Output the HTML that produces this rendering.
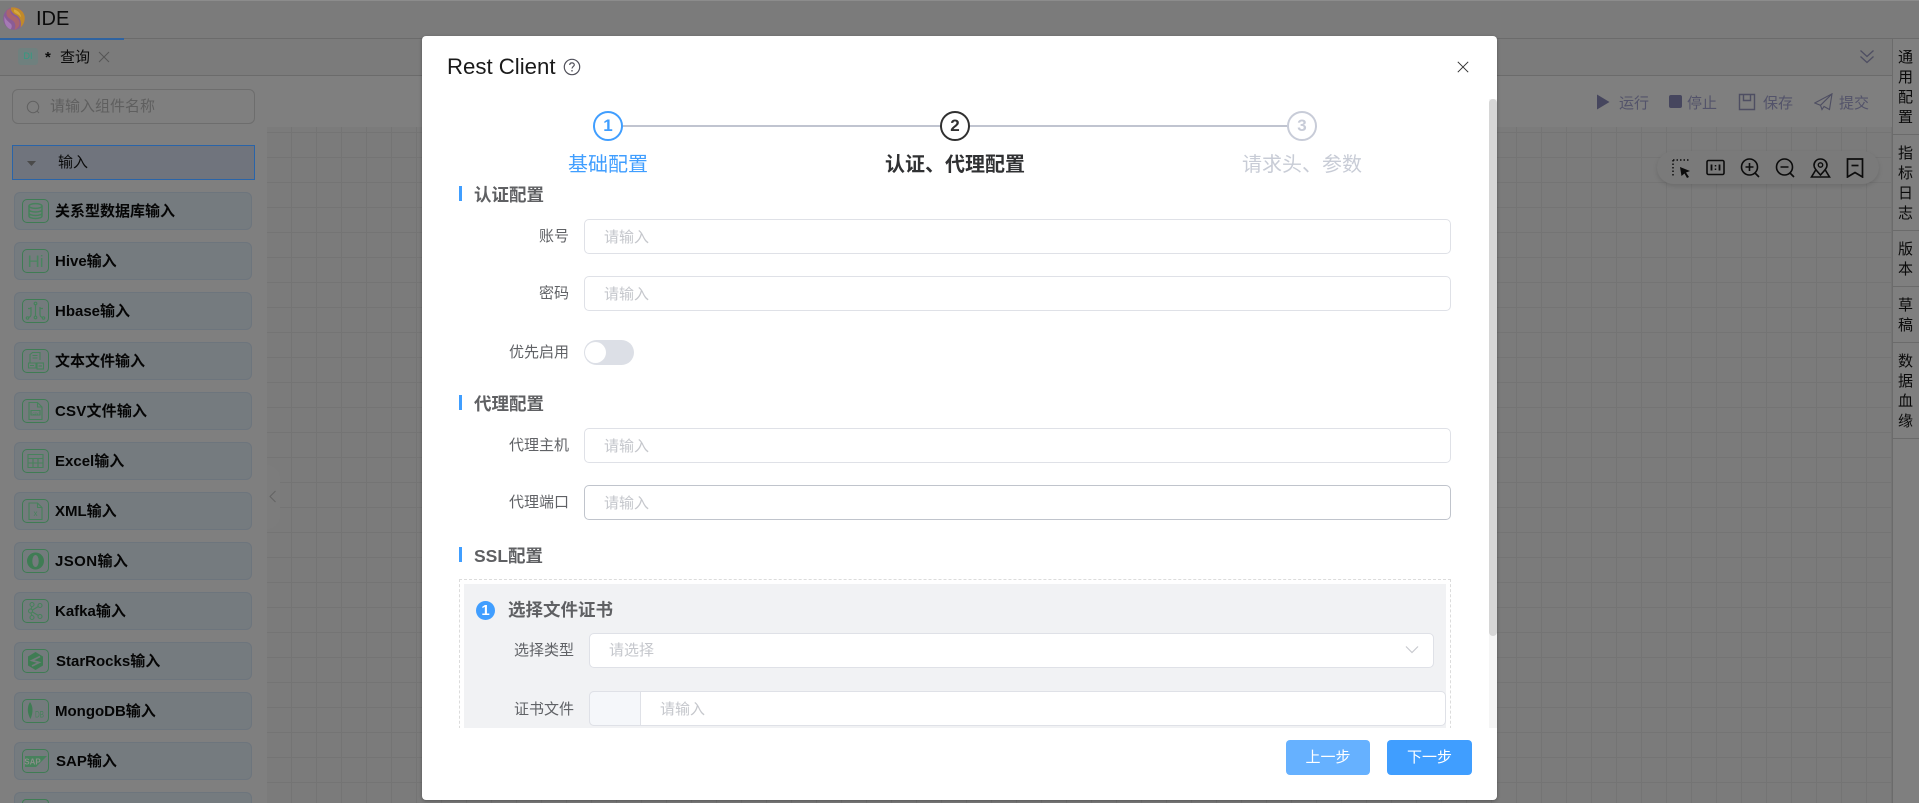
<!DOCTYPE html>
<html lang="zh">
<head>
<meta charset="utf-8">
<title>IDE</title>
<style>
html,body{margin:0;padding:0;width:1919px;height:803px;overflow:hidden;background:#7f7f7f}
body{position:relative;font-family:"Liberation Sans","Noto Sans CJK SC",sans-serif;color:#000}
div,span,svg{position:absolute;box-sizing:border-box}
.t{white-space:nowrap}
.line{background:#6b6b6b}
.item{left:14px;width:238px;height:38px;background:#757b7f;border:1px solid #6d757d;border-radius:6px}
.ib{left:22px;width:27px;height:24px;border:1px solid #3f7c54;border-radius:5px;background:#747b7d}
.it{left:55px;margin-top:1px;font-size:15px;font-weight:bold;line-height:20px;color:#050505;white-space:nowrap}
.tb{margin-top:1px;font-size:15px;line-height:20px;color:#53536a;white-space:nowrap}
.side{left:1897px;margin-top:1px;width:17px;font-size:15px;line-height:20px;text-align:center;color:#0a0a0a}
.hr{left:1892px;width:27px;height:1px;background:#6b6b6b}
.lb{margin-top:1px;font-size:15px;line-height:20px;color:#606266;text-align:right;white-space:nowrap}
.inp{background:#fff;border:1px solid #dfe1e7;border-radius:5px;height:35px}
.ph{margin-top:1px;font-size:15px;line-height:20px;color:#c5c7cc;white-space:nowrap}
.bar{left:459px;width:3px;height:15px;background:#409eff}
.sec{left:474px;font-size:17.5px;line-height:22px;font-weight:bold;color:#5f6063;white-space:nowrap}
.circ{width:30px;height:30px;top:111px;border-radius:50%;border:2px solid;background:#fff;font-size:17px;font-weight:bold;line-height:26px;text-align:center}
.stp{top:153px;font-size:20px;line-height:24px;white-space:nowrap}
.btn{top:740px;height:35px;border-radius:4px;color:#fff;font-size:15px;line-height:36px;text-align:center}
</style>
</head>
<body>

<!-- header -->
<div style="left:0;top:0;width:1919px;height:38px;background:#7b7b7b"></div>
<div style="left:0;top:0;width:1919px;height:1px;background:#8c8c8c"></div>
<svg style="left:3px;top:7px" width="22" height="23" viewBox="0 0 22 23">
<ellipse cx="11" cy="11.5" rx="10.8" ry="11.3" fill="#8a5c96"/>
<path d="M8 .6C14 -.5 20 3 21.600 9C22.300 13 21 17.500 17.500 20.500C18.800 15 17 10 13 8C10 6.500 7.500 4 8 .6Z" fill="#c08a2a"/>
<path d="M4 3.500C2.500 7 4 10.500 8 12.500C12 14.500 13.500 18 11.500 22.800C15.500 21.500 17.500 17.500 16 13.500C14.500 9.500 8.500 9 7.500 5C7.200 3.800 7.500 2.500 8.500 1.200C6.800 1.500 5.200 2.300 4 3.500Z" fill="#a9646e"/>
<path d="M11 2.500C14.500 3 17.500 6 18.300 10.500C16.500 8 14 7 12 5.800C10.800 5 10.500 3.800 11 2.500Z" fill="#d8a83c"/>
<path d="M1.500 9C2.500 13 6 15 8 17C9.300 18.800 8.800 21 7.500 22.300C3.500 20.800 .6 16 1.500 9Z" fill="#a57ab4"/>
</svg>
<div class="t" style="left:36px;top:7px;font-size:20px;line-height:24px;color:#0a0a0a">IDE</div>
<div class="line" style="left:0;top:38px;width:1892px;height:1px"></div>

<!-- tab row -->
<div style="left:0;top:39px;width:1892px;height:36px;background:#7b7b7b"></div>
<div style="left:0;top:38px;width:124px;height:2px;background:#2f63a0"></div>
<div style="left:18px;top:48px;width:20px;height:17px;border-radius:3px;background:#6f807e;color:#2f9c80;font-size:9px;line-height:17px;text-align:center">DI</div>
<div class="t" style="left:45px;top:48px;font-size:15px;line-height:20px;font-weight:bold;color:#0a0a0a">*</div>
<div class="t" style="left:60px;top:48px;font-size:15px;line-height:20px;color:#0a0a0a">查询</div>
<svg style="left:98px;top:51px" width="12" height="12" viewBox="0 0 12 12"><path d="M1 1L11 11M11 1L1 11" stroke="#555" stroke-width="1" fill="none"/></svg>
<div class="line" style="left:0;top:75px;width:1892px;height:1px"></div>
<svg style="left:1859px;top:49px" width="16" height="16" viewBox="0 0 16 16"><path d="M1.500 1.500L8 7.500L14.500 1.500M1.500 7.500L8 13.500L14.500 7.500" stroke="#4e4e62" stroke-width="1.300" fill="none"/></svg>

<!-- main backgrounds -->
<div style="left:0;top:76px;width:1892px;height:727px;background:#7f7f7f"></div>
<div style="left:267px;top:127px;width:1625px;height:676px;background-color:#7b7b7b;background-image:linear-gradient(#747474 1px,transparent 1px),linear-gradient(90deg,#747474 1px,transparent 1px);background-size:25px 25px;background-position:24px 5px"></div>
<div style="left:267px;top:465px;width:13px;height:64px;background:#7c7c7c;border-radius:0 14px 14px 0"></div>
<svg style="left:269px;top:490px" width="8" height="13" viewBox="0 0 8 13"><path d="M6.500 1L1 6.500L6.500 12" stroke="#636363" fill="none"/></svg>

<!-- search -->
<div style="left:12px;top:89px;width:243px;height:35px;border:1px solid #6d6d6d;border-radius:6px"></div>
<svg style="left:26px;top:100px" width="15" height="15" viewBox="0 0 15 15"><circle cx="7" cy="7" r="5.700" stroke="#616161" fill="none"/><path d="M11 11L13 13" stroke="#616161"/></svg>
<div class="t" style="left:50px;top:97px;font-size:15px;line-height:20px;color:#5f5f5f">请输入组件名称</div>

<!-- category -->
<div style="left:12px;top:145px;width:243px;height:35px;background:#70747d;border:1px solid #2a64a8"></div>
<svg style="left:27px;top:161px" width="9" height="5" viewBox="0 0 9 5"><path d="M0 0H9L4.500 5Z" fill="#4a4a4a"/></svg>
<div class="t" style="left:58px;top:153px;font-size:15px;line-height:20px;color:#0a0a0a">输入</div>

<!-- items -->
<div class="item" style="top:192px"></div><div class="ib" style="top:199px"></div>
<svg style="left:22px;top:199px" width="27" height="24" viewBox="0 0 27 24"><g fill="none" stroke="#47825c" stroke-width="1.500"><ellipse cx="13.500" cy="7" rx="6.500" ry="2.400"/><path d="M7 7V17C7 18.600 10 19.500 13.500 19.500S20 18.600 20 17V7M7 10.500C7 12 10 13 13.500 13S20 12 20 10.500M7 14C7 15.500 10 16.500 13.500 16.500S20 15.500 20 14"/></g></svg>
<div class="it" style="top:201px">关系型数据库输入</div>

<div class="item" style="top:242px"></div><div class="ib" style="top:249px"></div>
<div class="t" style="left:22px;top:249px;width:27px;text-align:center;font-size:17px;line-height:25px;color:#4a8560">Hi</div>
<div class="it" style="top:251px">Hive输入</div>

<div class="item" style="top:292px"></div><div class="ib" style="top:299px"></div>
<svg style="left:22px;top:299px" width="27" height="24" viewBox="0 0 27 24"><g fill="none" stroke="#47825c" stroke-width="1.200"><path d="M13.500 5V17M9 8V15C9 17.500 8 18 6.500 18.500M18 8V15C18 17.500 19 18 20.500 18.500"/><path d="M6 9.500H9M18 9.500H21"/><circle cx="13.500" cy="4.500" r="1.300"/><circle cx="13.500" cy="18.500" r="1.300"/><circle cx="5.500" cy="19" r="1.200"/><circle cx="21.500" cy="19" r="1.200"/></g></svg>
<div class="it" style="top:301px">Hbase输入</div>

<div class="item" style="top:342px"></div><div class="ib" style="top:349px"></div>
<svg style="left:22px;top:349px" width="27" height="24" viewBox="0 0 27 24"><g fill="none" stroke="#47825c" stroke-width="1.100"><path d="M8 14V5.500L10.500 3.500H18V11M6.500 14H14V19H6.500Z"/><path d="M10.500 6.500H15.500M10.500 9H15.500M8 16.500H12"/><rect x="15" y="14" width="6.500" height="6"/><path d="M16.500 17H20"/></g></svg>
<div class="it" style="top:351px">文本文件输入</div>

<div class="item" style="top:392px"></div><div class="ib" style="top:399px"></div>
<svg style="left:22px;top:399px" width="27" height="24" viewBox="0 0 27 24"><path d="M7 3.500H15.500L20 8V20.500H7Z M15.500 3.500V8H20 M9 11.500H18V16H9Z" fill="none" stroke="#47825c" stroke-width="1.100"/><text x="13.500" y="15.300" font-size="4" text-anchor="middle" fill="#47825c" font-family="Liberation Sans">csv</text></svg>
<div class="it" style="top:401px;letter-spacing:.2px">CSV文件输入</div>

<div class="item" style="top:442px"></div><div class="ib" style="top:449px"></div>
<svg style="left:22px;top:449px" width="27" height="24" viewBox="0 0 27 24"><path d="M6 5.500H21V18.500H6ZM6 9.500H21M6 14H21M11 9.500V18.500M16 9.500V18.500" fill="none" stroke="#47825c" stroke-width="1.100"/></svg>
<div class="it" style="top:451px">Excel输入</div>

<div class="item" style="top:492px"></div><div class="ib" style="top:499px"></div>
<svg style="left:22px;top:499px" width="27" height="24" viewBox="0 0 27 24"><path d="M7 4H15.500L20 8.500V20.500H7Z M15.500 4V8.500H20" fill="none" stroke="#47825c" stroke-width="1.100"/><text x="13.500" y="17" font-size="8" text-anchor="middle" fill="#47825c" font-family="Liberation Sans">x</text></svg>
<div class="it" style="top:501px">XML输入</div>

<div class="item" style="top:542px"></div><div class="ib" style="top:549px"></div>
<svg style="left:22px;top:549px" width="27" height="24" viewBox="0 0 27 24"><circle cx="13.500" cy="12" r="8.500" fill="#3f7c54"/><ellipse cx="13.500" cy="12" rx="3.200" ry="6" fill="#747b7d"/></svg>
<div class="it" style="top:551px;letter-spacing:.4px">JSON输入</div>

<div class="item" style="top:592px"></div><div class="ib" style="top:599px"></div>
<svg style="left:22px;top:599px" width="27" height="24" viewBox="0 0 27 24"><g fill="none" stroke="#47825c" stroke-width="1.100"><circle cx="10" cy="5.500" r="2"/><circle cx="8.500" cy="12" r="2"/><circle cx="10" cy="18.500" r="2"/><circle cx="18" cy="6.500" r="2"/><circle cx="18" cy="17.500" r="2"/><path d="M10 7.500L9 10M10 16.500L9 14M10.500 11L16.300 7.500M10.500 13L16.300 16.500"/></g></svg>
<div class="it" style="top:601px">Kafka输入</div>

<div class="item" style="top:642px"></div><div class="ib" style="top:649px"></div>
<svg style="left:22px;top:649px" width="27" height="24" viewBox="0 0 27 24"><path d="M13.500 3L21 7.500V16.500L13.500 21L6 16.500V7.500Z" fill="#3f7c54"/><path d="M18 7.500L10 11.500L17 13.500L10 17" fill="none" stroke="#747b7d" stroke-width="1.800"/></svg>
<div class="it" style="top:651px;left:56px">StarRocks输入</div>

<div class="item" style="top:692px"></div><div class="ib" style="top:699px"></div>
<svg style="left:22px;top:699px" width="27" height="24" viewBox="0 0 27 24"><path d="M8 3C11 7 11.500 13 8.500 20C5 14 5 8 8 3Z" fill="#3f7c54"/><text x="17.500" y="18.500" font-size="9" text-anchor="middle" fill="#47825c" font-family="Liberation Sans" textLength="9" lengthAdjust="spacingAndGlyphs">DB</text></svg>
<div class="it" style="top:701px">MongoDB输入</div>

<div class="item" style="top:742px"></div><div class="ib" style="top:749px"></div>
<svg style="left:22px;top:749px" width="27" height="24" viewBox="0 0 27 24"><path d="M3 7H25L14 18H3Z" fill="#47825c"/><text x="10.500" y="15.500" font-size="8" font-weight="bold" text-anchor="middle" fill="#8a8f8a" font-family="Liberation Sans">SAP</text></svg>
<div class="it" style="top:751px;left:56px">SAP输入</div>

<div class="item" style="top:792px;height:11px;border-bottom:0;border-radius:6px 6px 0 0"></div>
<div class="ib" style="top:799px;height:4px;border-bottom:0;border-radius:5px 5px 0 0"></div>

<!-- toolbar -->
<svg style="left:1596px;top:94px" width="14" height="16" viewBox="0 0 14 16"><path d="M1 .5L13.500 8L1 15.500Z" fill="#46465e"/></svg>
<div class="tb" style="left:1619px;top:93px">运行</div>
<div style="left:1669px;top:95px;width:13px;height:13px;border-radius:2px;background:#46465e"></div>
<div class="tb" style="left:1687px;top:93px">停止</div>
<svg style="left:1738px;top:93px" width="18" height="18" viewBox="0 0 18 18"><path d="M1.500 1.500H16.500V16.500H1.500ZM5.500 1.500V7.500H12.500V1.500" fill="none" stroke="#4e4e62" stroke-width="1.400"/></svg>
<div class="tb" style="left:1763px;top:93px">保存</div>
<svg style="left:1814px;top:93px" width="19" height="18" viewBox="0 0 19 18"><path d="M18 .8L.8 10L6.500 12.300L18 .8L15.500 16.500L10 13.500L8 16.500L6.500 12.300" fill="none" stroke="#4e4e62" stroke-width="1.100"/></svg>
<div class="tb" style="left:1839px;top:93px">提交</div>

<!-- float toolbar -->
<div style="left:1657px;top:151px;width:222px;height:33px;border-radius:17px;background:#7a7a7a;box-shadow:0 2px 5px rgba(0,0,0,.12)"></div>
<svg style="left:1671px;top:158px" width="20" height="20" viewBox="0 0 20 20"><path d="M2 2H18M2 2V19" fill="none" stroke="#0c0c0c" stroke-width="1.500" stroke-dasharray="1.500 2"/><path d="M9 9L19 13L15 14.500L18 19L16 20L13.500 15.500L10.500 18Z" fill="#0c0c0c"/></svg>
<svg style="left:1706px;top:158px" width="19" height="19" viewBox="0 0 19 19"><rect x="1" y="2.500" width="17" height="14" rx="1.500" fill="none" stroke="#0c0c0c" stroke-width="1.600"/><path d="M5.500 6.500V12.500M13.500 6.500V12.500" stroke="#0c0c0c" stroke-width="1.800"/><path d="M9.500 7V8.500M9.500 10.500V12" stroke="#0c0c0c" stroke-width="1.500"/></svg>
<svg style="left:1740px;top:158px" width="20" height="20" viewBox="0 0 20 20"><circle cx="9.500" cy="9" r="8" fill="none" stroke="#0c0c0c" stroke-width="1.600"/><path d="M15 15L19 19M5.500 9H13.500M9.500 5V13" stroke="#0c0c0c" stroke-width="1.600" fill="none"/></svg>
<svg style="left:1775px;top:158px" width="20" height="20" viewBox="0 0 20 20"><circle cx="9.500" cy="9" r="8" fill="none" stroke="#0c0c0c" stroke-width="1.600"/><path d="M15 15L19 19M5.500 9H13.500" stroke="#0c0c0c" stroke-width="1.600" fill="none"/></svg>
<svg style="left:1810px;top:158px" width="21" height="20" viewBox="0 0 21 20"><path d="M10.500 1C6.500 1 4 4 4 7.200C4 10 6.500 12.500 10.500 17C14.500 12.500 17 10 17 7.200C17 4 14.500 1 10.500 1Z" fill="none" stroke="#0c0c0c" stroke-width="1.600"/><circle cx="10.500" cy="7" r="2.200" fill="none" stroke="#0c0c0c" stroke-width="1.400"/><path d="M6 11.500L1.500 19H19.500L15 11.500" fill="none" stroke="#0c0c0c" stroke-width="1.600"/></svg>
<svg style="left:1846px;top:158px" width="18" height="20" viewBox="0 0 18 20"><path d="M1.500 1H16.500V19L9 14.500L1.500 19Z" fill="none" stroke="#0c0c0c" stroke-width="1.700"/><path d="M5.500 7.500H12.500" stroke="#0c0c0c" stroke-width="1.700"/></svg>

<!-- right sidebar -->
<div style="left:1892px;top:38px;width:1px;height:765px;background:#6b6b6b"></div>
<div class="line" style="left:1892px;top:38px;width:27px;height:1px"></div>
<div class="side" style="top:47px">通<br>用<br>配<br>置</div>
<div class="hr" style="top:134px"></div>
<div class="side" style="top:143px">指<br>标<br>日<br>志</div>
<div class="hr" style="top:230px"></div>
<div class="side" style="top:239px">版<br>本</div>
<div class="hr" style="top:286px"></div>
<div class="side" style="top:295px">草<br>稿</div>
<div class="hr" style="top:342px"></div>
<div class="side" style="top:351px">数<br>据<br>血<br>缘</div>
<div class="hr" style="top:438px"></div>

<!-- modal -->
<div style="left:422px;top:36px;width:1075px;height:764px;background:#fff;border-radius:4px;box-shadow:0 1px 3px rgba(0,0,0,.3)"></div>
<div class="t" style="left:447px;top:53px;font-size:22.2px;line-height:28px;color:#1a1a1a">Rest Client</div>
<svg style="left:563px;top:58px" width="18" height="18" viewBox="0 0 18 18"><circle cx="9" cy="9" r="7.700" fill="none" stroke="#50505a" stroke-width="1.200"/><path d="M6.700 7C6.800 5.600 7.800 4.900 9 4.900C10.300 4.900 11.300 5.700 11.300 6.900C11.300 8.400 9 8.500 9 10.500" fill="none" stroke="#50505a" stroke-width="1.200"/><circle cx="9" cy="12.800" r=".8" fill="#50505a"/></svg>
<svg style="left:1457px;top:61px" width="12" height="12" viewBox="0 0 12 12"><path d="M.8 .8L11.200 11.200M11.200 .8L.8 11.200" stroke="#333" stroke-width="1" fill="none"/></svg>

<!-- scrollbar -->
<div style="left:1489px;top:99px;width:8px;height:629px;background:#f5f5f5"></div>
<div style="left:1489px;top:99px;width:8px;height:537px;background:#d6d6d6;border-radius:4px"></div>

<!-- steps -->
<div style="left:623px;top:125px;width:664px;height:2px;background:#c0c4d0"></div>
<div class="circ" style="left:593px;border-color:#409eff;color:#409eff">1</div>
<div class="circ" style="left:940px;border-color:#303030;color:#303030">2</div>
<div class="circ" style="left:1287px;border-color:#c8ccd8;color:#c8ccd8">3</div>
<div class="stp" style="left:568px;color:#409eff">基础配置</div>
<div class="stp" style="left:885px;font-weight:bold;color:#303133">认证、代理配置</div>
<div class="stp" style="left:1242px;color:#c8ccd6">请求头、参数</div>

<!-- form -->
<div class="bar" style="top:186px"></div>
<div class="sec" style="top:184px">认证配置</div>
<div class="lb" style="left:509px;width:60px;top:226px">账号</div>
<div class="inp" style="left:584px;top:219px;width:867px"></div>
<div class="ph" style="left:604px;top:227px">请输入</div>
<div class="lb" style="left:509px;width:60px;top:283px">密码</div>
<div class="inp" style="left:584px;top:276px;width:867px"></div>
<div class="ph" style="left:604px;top:284px">请输入</div>
<div class="lb" style="left:509px;width:60px;top:342px">优先启用</div>
<div style="left:584px;top:340px;width:50px;height:25px;border-radius:13px;background:#dcdfe6"></div>
<div style="left:585px;top:342px;width:21px;height:21px;border-radius:50%;background:#fff"></div>

<div class="bar" style="top:395px"></div>
<div class="sec" style="top:393px">代理配置</div>
<div class="lb" style="left:509px;width:60px;top:435px">代理主机</div>
<div class="inp" style="left:584px;top:428px;width:867px"></div>
<div class="ph" style="left:604px;top:436px">请输入</div>
<div class="lb" style="left:509px;width:60px;top:492px">代理端口</div>
<div class="inp" style="left:584px;top:485px;width:867px;border-color:#c0c4cc"></div>
<div class="ph" style="left:604px;top:493px">请输入</div>

<div class="bar" style="top:547px"></div>
<div class="sec" style="top:545px">SSL配置</div>

<div style="left:459px;top:579px;width:992px;height:160px;border:1px dashed #dcdcdc"></div>
<div style="left:464px;top:584px;width:982px;height:150px;background:#f1f2f4"></div>
<div style="left:476px;top:601px;width:19px;height:19px;border-radius:50%;background:#409eff;color:#fff;font-size:15px;font-weight:bold;line-height:19px;text-align:center">1</div>
<div class="sec" style="left:508px;top:599px">选择文件证书</div>
<div class="lb" style="left:514px;width:60px;top:640px">选择类型</div>
<div class="inp" style="left:589px;top:633px;width:845px"></div>
<div class="ph" style="left:609px;top:640px">请选择</div>
<svg style="left:1405px;top:645px" width="14" height="9" viewBox="0 0 14 9"><path d="M1 1.500L7 7.500L13 1.500" fill="none" stroke="#c8c9cf" stroke-width="1.200"/></svg>
<div class="lb" style="left:514px;width:60px;top:699px">证书文件</div>
<div class="inp" style="left:589px;top:691px;width:857px"></div>
<div style="left:589px;top:691px;width:52px;height:35px;background:#f5f7fa;border:1px solid #dfe1e7;border-radius:5px 0 0 5px"></div>
<div class="ph" style="left:660px;top:699px">请输入</div>

<!-- footer -->
<div style="left:423px;top:728px;width:1074px;height:71px;background:#fff;border-radius:0 0 4px 4px"></div>
<div class="btn" style="left:1286px;width:84px;background:#66b1ff">上一步</div>
<div class="btn" style="left:1387px;width:85px;background:#409eff">下一步</div>

</body>
</html>
